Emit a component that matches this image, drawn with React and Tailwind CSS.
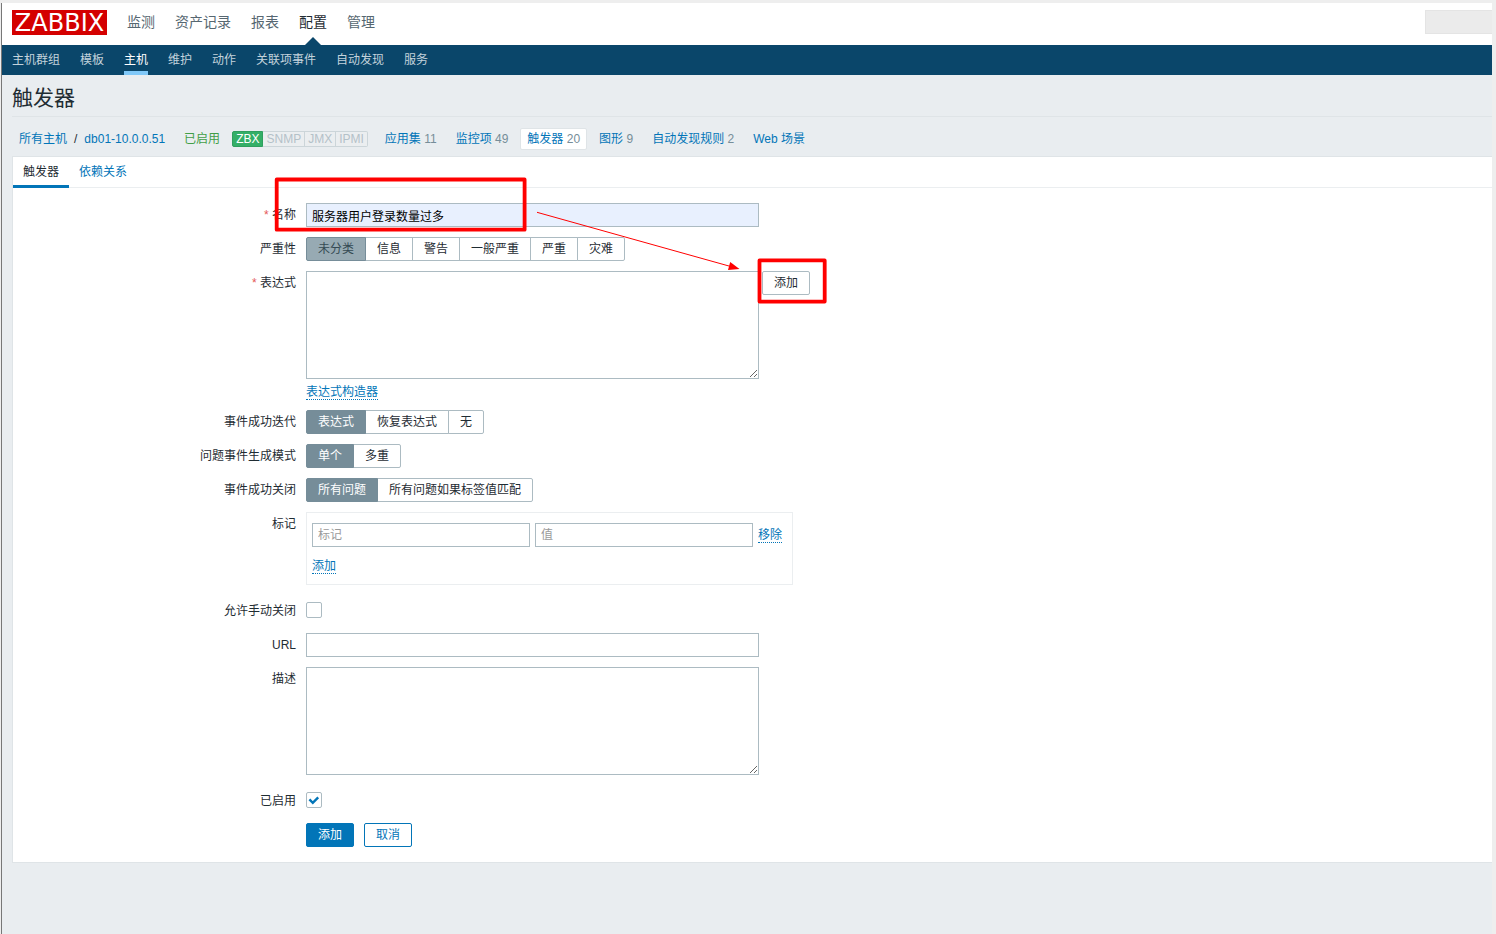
import { useState } from 'react'

const MAIN_MENU = ['监测', '资产记录', '报表', '配置', '管理']
const SUB_MENU = ['主机群组', '模板', '主机', '维护', '动作', '关联项事件', '自动发现', '服务']
const INTERFACES = ['SNMP', 'JMX', 'IPMI']

const HOST_LINKS = [
  { label: '应用集', count: 11 },
  { label: '监控项', count: 49 },
  { label: '触发器', count: 20, active: true },
  { label: '图形', count: 9 },
  { label: '自动发现规则', count: 2 },
  { label: 'Web 场景' },
]

const SEVERITIES = ['未分类', '信息', '警告', '一般严重', '严重', '灾难']

const inputCls = 'block h-6 px-[5px] bg-white border border-[#acbbc2] text-xs text-black outline-none placeholder:text-[#9a9a9a]'
const textareaCls = 'block w-[453px] h-[108px] px-[5px] py-1 bg-white border border-[#acbbc2] text-xs outline-none resize'
const buttonCls = 'h-6 px-[11px] border rounded-[2px] text-xs leading-[22px] cursor-pointer'
const actionCls = 'text-[#0275b8] leading-[14px] border-b border-dotted border-[#0275b8] cursor-pointer'

function Row({ label, htmlFor, required, tall, children }) {
  return (
    <div className="grid grid-cols-[283px_1fr] gap-x-[10px]">
      <label htmlFor={htmlFor} className={`text-right ${tall ? 'h-7 pt-1 leading-6' : 'leading-6'}`}>
        {required && <span className="text-[#e45959]">* </span>}
        {label}
      </label>
      <div>{children}</div>
    </div>
  )
}

function Segmented({ name, options, muted }) {
  const [value, setValue] = useState(options[0])
  const checkedCls = muted
    ? 'z-10 bg-[#97aab3] border-[#768d99] text-[#354a54]'
    : 'z-10 bg-[#768d99] border-[#768d99] text-white'

  return (
    <div className="flex pl-px" role="radiogroup">
      {options.map(option => (
        <label
          key={option}
          className={`relative -ml-px h-6 px-[11px] border leading-[22px] cursor-pointer first:rounded-l-[2px] last:rounded-r-[2px] ${
            value === option ? checkedCls : 'bg-white border-[#acbbc2]'
          }`}
        >
          <input
            type="radio"
            name={name}
            className="sr-only"
            checked={value === option}
            onChange={() => setValue(option)}
          />
          {option}
        </label>
      ))}
    </div>
  )
}

function Checkbox({ id, defaultChecked }) {
  return (
    <div className="h-7 pt-[7px]">
      <div className="relative size-4">
        <input
          id={id}
          type="checkbox"
          defaultChecked={defaultChecked}
          className="peer block size-4 appearance-none bg-white border border-[#acbbc2] rounded-[2px]"
        />
        <svg
          viewBox="0 0 16 16"
          className="absolute inset-0 size-4 hidden peer-checked:block pointer-events-none"
          fill="none"
          stroke="#0275b8"
          strokeWidth="2.4"
        >
          <path d="M3.4 7.4 L6.8 10.8 L12.2 5.4" />
        </svg>
      </div>
    </div>
  )
}

// Red frames round the name and the add button, with the arrow between them
function Annotation() {
  return (
    <svg
      className="absolute z-20 left-[261px] -top-[10px] pointer-events-none"
      width="553"
      height="126"
      viewBox="274 178 553 126"
      fill="none"
      overflow="visible"
    >
      <g stroke="#ff0000" strokeWidth="3.8" strokeLinejoin="round">
        <rect x="276.7" y="179.5" width="247.9" height="50.2" />
        <rect x="759.5" y="260.4" width="65.2" height="41.2" />
      </g>
      <path d="M537 212.3 L730 266.3" stroke="#ff0000" strokeWidth="1" />
      <path d="M739.5 269 L730.2 262 L728 270 Z" fill="#ff0000" />
    </svg>
  )
}

function Header() {
  return (
    <header>
      <div className="flex items-start justify-between h-[42px] pl-[10px] pt-[7px] bg-white">
        <div className="flex items-center">
          <a
            href="#"
            className="w-[95px] h-[25px] bg-[#d40000] text-white text-center text-[24px] leading-[27px] font-['DejaVu_Sans',sans-serif]"
          >
            ZABBIX
          </a>
          <nav className="flex gap-5 pl-5 text-sm leading-[25px]">
            {MAIN_MENU.map(item => (
              <a key={item} href="#" className={`relative ${item === '配置' ? 'text-[#1f2c33]' : 'text-[#566771]'}`}>
                {item}
                {item === '配置' && (
                  <svg className="absolute top-[27px] left-[6px]" width="16" height="8" viewBox="0 0 16 8">
                    <path d="M0 8 L8 0 L16 8 Z" fill="#0a466a" />
                  </svg>
                )}
              </a>
            ))}
          </nav>
        </div>
        <div className="w-[67px] h-6 bg-[#ebebeb] border border-r-0 border-[#e4e4e4]" />
      </div>
      <nav className="flex gap-5 h-[30px] px-[10px] bg-[#0a466a] leading-[30px]">
        {SUB_MENU.map(item => (
          <a
            key={item}
            href="#"
            className={item === '主机' ? 'h-[30px] text-white border-b-4 border-[#80c8f8]' : 'text-[#c3d3dc]'}
          >
            {item}
          </a>
        ))}
      </nav>
    </header>
  )
}

function HostBar() {
  return (
    <div className="flex items-center gap-[5px] h-[22px] text-[#0275b8]">
      <div className="flex px-[7px]">
        <a href="#">所有主机</a>
        <span className="px-[7px] text-[#1f2c33]">/</span>
        <a href="#">db01-10.0.0.51</a>
      </div>
      <span className="px-[7px] text-[#429e47]">已启用</span>
      <div className="flex mr-[5px] leading-[14px]">
        <span className="px-[3px] bg-[#34af67] border border-[#2f9f5e] rounded-l-[2px] text-white">ZBX</span>
        {INTERFACES.map(item => (
          <span key={item} className="px-[3px] bg-[#ebeef0] border border-l-0 border-[#ccd5d9] text-[#b4c1c8] last:rounded-r-[2px]">
            {item}
          </span>
        ))}
      </div>
      {HOST_LINKS.map(({ label, count, active }) => (
        <a
          key={label}
          href="#"
          className={`px-[6px] border leading-5 rounded-[2px] ${
            active ? 'bg-white border-[#dfe4e7]' : 'border-transparent'
          }`}
        >
          {label}
          {count && <span className="text-[#768d99]"> {count}</span>}
        </a>
      ))}
    </div>
  )
}

function TriggerForm() {
  return (
    <form className="relative flex flex-col gap-[10px] py-[15px]" onSubmit={e => e.preventDefault()}>
      <Row label="名称" htmlFor="name" required>
        <input id="name" type="text" defaultValue="服务器用户登录数量过多" className={`${inputCls} w-[453px] bg-[#e8f0fe]!`} />
      </Row>
      <Row label="严重性">
        <Segmented name="severity" options={SEVERITIES} muted />
      </Row>
      <Row label="表达式" htmlFor="expression" required>
        <div className="flex items-start gap-[3px]">
          <textarea id="expression" className={textareaCls} />
          <button type="button" className={`${buttonCls} bg-white border-[#acbbc2]`}>添加</button>
        </div>
        <div className="flex items-start h-[21px] pt-[6px]">
          <button type="button" className={actionCls}>表达式构造器</button>
        </div>
      </Row>
      <Row label="事件成功迭代">
        <Segmented name="recovery" options={['表达式', '恢复表达式', '无']} />
      </Row>
      <Row label="问题事件生成模式">
        <Segmented name="mode" options={['单个', '多重']} />
      </Row>
      <Row label="事件成功关闭">
        <Segmented name="close" options={['所有问题', '所有问题如果标签值匹配']} />
      </Row>
      <Row label="标记" htmlFor="tag">
        <div className="w-fit h-[73px] pt-[10px] pl-[5px] pr-[10px] border border-[#ebeef0]">
          <div className="flex items-center gap-[5px]">
            <input id="tag" type="text" placeholder="标记" className={`${inputCls} w-[218px]`} />
            <input type="text" placeholder="值" aria-label="值" className={`${inputCls} w-[218px]`} />
            <button type="button" className={actionCls}>移除</button>
          </div>
          <div className="flex pt-3">
            <button type="button" className={actionCls}>添加</button>
          </div>
        </div>
      </Row>
      <Row label="允许手动关闭" htmlFor="manual" tall>
        <Checkbox id="manual" />
      </Row>
      <Row label="URL" htmlFor="url">
        <input id="url" type="text" className={`${inputCls} w-[453px]`} />
      </Row>
      <Row label="描述" htmlFor="description">
        <textarea id="description" className={textareaCls} />
      </Row>
      <Row label="已启用" htmlFor="enabled" tall>
        <Checkbox id="enabled" defaultChecked />
      </Row>
      <Row>
        <div className="flex gap-[10px]">
          <button type="submit" className={`${buttonCls} bg-[#0275b8] border-[#0275b8] text-white`}>添加</button>
          <button type="button" className={`${buttonCls} bg-white border-[#0275b8] text-[#0275b8]`}>取消</button>
        </div>
      </Row>
      <Annotation />
    </form>
  )
}

export default function App() {
  return (
    <div className="flex min-h-screen pt-[3px] pl-px pr-1 bg-[#eeeeee] text-xs text-[#1f2c33] font-['Liberation_Sans','Noto_Sans_CJK_SC',sans-serif]">
      <div className="flex-1 min-w-0 border-l border-[#777777] bg-[#e9edf0]">
        <Header />
        <main className="pl-[10px]">
          <h1 className="h-[42px] border-b border-[#dfe4e7] text-[21px] leading-[46px]">触发器</h1>
          <div className="pt-[11px] pb-[6px]">
            <HostBar />
          </div>
          <section className="bg-white border border-r-0 border-[#dfe4e7]">
            <div className="flex h-[31px] border-b border-[#ebeef0]" role="tablist">
              <button type="button" role="tab" aria-selected="true" className="h-[31px] px-[10px] pt-[2px] border-b-3 border-[#0275b8]">
                触发器
              </button>
              <button type="button" role="tab" aria-selected="false" className="h-[31px] px-[10px] pt-[2px] border-b-3 border-transparent text-[#0275b8]">
                依赖关系
              </button>
            </div>
            <TriggerForm />
          </section>
        </main>
      </div>
    </div>
  )
}
